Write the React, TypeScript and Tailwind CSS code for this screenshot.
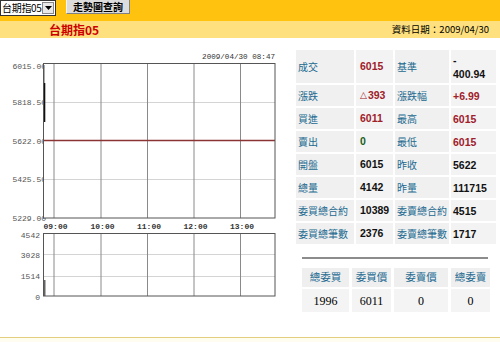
import React from "react";

const CJK = "'Noto Sans CJK TC', 'Noto Sans CJK SC', sans-serif";

type Cell = { t: string; c?: string };

const rows: [string, Cell, string, Cell][] = [
  ["成交", { t: "6015", c: "red" }, "基準", { t: "-\n400.94", c: "black" }],
  ["漲跌", { t: "△393", c: "red" }, "漲跌幅", { t: "+6.99", c: "red" }],
  ["買進", { t: "6011", c: "red" }, "最高", { t: "6015", c: "red" }],
  ["賣出", { t: "0", c: "green" }, "最低", { t: "6015", c: "red" }],
  ["開盤", { t: "6015" }, "昨收", { t: "5622" }],
  ["總量", { t: "4142" }, "昨量", { t: "111715" }],
  ["委買總合約", { t: "10389" }, "委賣總合約", { t: "4515" }],
  ["委買總筆數", { t: "2376" }, "委賣總筆數", { t: "1717" }],
];

function valColor(c?: string) {
  if (c === "red") return "text-[#a0202a]";
  if (c === "green") return "text-[#1b5e1b]";
  return "text-[#111]";
}

function Val({ t }: { t: string }) {
  if (t.startsWith("△")) {
    return (
      <>
        <span className="text-[9px] font-bold mr-[1px]" style={{ fontFamily: "'DejaVu Sans', sans-serif" }}>
          △
        </span>
        {t.slice(1)}
      </>
    );
  }
  return <>{t}</>;
}

function Chart() {
  const vx = [54, 101, 147.5, 194, 240.5];
  const times = ["09:00", "10:00", "11:00", "12:00", "13:00"];
  const yl: [string, number][] = [
    ["6015.00", 66],
    ["5818.50", 102],
    ["5622.00", 140.5],
    ["5425.50", 179],
    ["5229.00", 218],
  ];
  const vl: [string, number][] = [
    ["4542", 235],
    ["3028", 255],
    ["1514", 276],
    ["0", 297],
  ];
  return (
    <svg width={290} height={299} viewBox="0 38 290 299" className="block">
      <text x={275} y={59} textAnchor="end" fontFamily="'Liberation Mono', monospace" fontSize={7.6} fill="#333">
        2009/04/30 08:47
      </text>
      {yl.map(([t, y]) => (
        <text key={t} x={46} y={y + 3} textAnchor="end" fontFamily="'Liberation Mono', monospace" fontSize={8} fill="#555">
          {t}
        </text>
      ))}
      <rect x={43} y={63} width={232} height={155} fill="#fff" />
      {[102, 179].map((y) => (
        <line key={y} x1={43} x2={275} y1={y + 0.5} y2={y + 0.5} stroke="#d4d4d4" strokeWidth={1} />
      ))}
      {vx.map((x) => (
        <line key={x} x1={x} x2={x} y1={63} y2={218} stroke="#8a8a8a" strokeWidth={1} />
      ))}
      <line x1={43} x2={275} y1={140.5} y2={140.5} stroke="#8b3434" strokeWidth={1.5} />
      <rect x={43.5} y={65} width={1.5} height={18} fill="#aaa" />
      <rect x={43.5} y={83} width={1.8} height={39} fill="#111" />
      <rect x={43.5} y={63.5} width={231.5} height={154.5} fill="none" stroke="#555" strokeWidth={1} />
      {times.map((t, i) => (
        <text key={t} x={vx[i] + 1.5} y={229} textAnchor="middle" fontFamily="'Liberation Mono', monospace" fontWeight="bold" fontSize={8} fill="#333">
          {t}
        </text>
      ))}
      {vl.map(([t, y]) => (
        <text key={t} x={40} y={y + 3} textAnchor="end" fontFamily="'Liberation Mono', monospace" fontSize={8} fill="#555">
          {t}
        </text>
      ))}
      <rect x={43} y={233} width={232} height={63} fill="#fff" />
      {[254, 276].map((y) => (
        <line key={y} x1={43} x2={275} y1={y + 0.5} y2={y + 0.5} stroke="#d4d4d4" strokeWidth={1} />
      ))}
      {vx.map((x) => (
        <line key={x} x1={x} x2={x} y1={233} y2={296} stroke="#8a8a8a" strokeWidth={1} />
      ))}
      <rect x={44} y={280} width={1.5} height={16} fill="#666" />
      <rect x={43.5} y={233.5} width={231.5} height={62.5} fill="none" stroke="#555" strokeWidth={1} />
    </svg>
  );
}

export default function App() {
  return (
    <div className="w-[500px] h-[342px] bg-white overflow-hidden" style={{ fontFamily: CJK }}>
      {/* top bar */}
      <div className="h-[21px] bg-[#fec20f] flex items-start">
        <div className="w-[56px] h-[16px] bg-white border border-[#333] flex items-center justify-between">
          <span className="text-[10px] leading-none text-black pl-[1px] tracking-[-0.3px] whitespace-nowrap">台期指05</span>
          <div className="w-[12px] h-[12px] mr-[1px] shrink-0 bg-[#e8e8e8] border border-[#888] flex items-center justify-center">
            <svg width="7" height="4" viewBox="0 0 7 4">
              <polygon points="0,0 7,0 3.5,4" fill="#000" />
            </svg>
          </div>
        </div>
        <div className="ml-[10px] w-[64px] h-[14px] bg-[#dcdcdc] border-r border-b border-[#808080] border-l border-l-[#f4f4f4] flex items-center justify-center">
          <span className="text-[10px] leading-none font-bold text-black whitespace-nowrap">走勢圖查詢</span>
        </div>
      </div>
      {/* second band */}
      <div className="h-[17px] bg-[#ffe07e] flex items-center justify-between">
        <span className="pl-[49px] text-[12px] leading-none font-bold text-[#cc0000]">台期指05</span>
        <span className="pr-[11px] text-[9.5px] leading-none text-black">資料日期：2009/04/30</span>
      </div>
      {/* main */}
      <div className="h-[299px] flex">
        <div className="w-[296px] shrink-0">
          <Chart />
        </div>
        <div className="pt-[12px]">
          <div className="grid grid-cols-[58px_37px_54px_45px] gap-[2px] grid-rows-[33px_repeat(7,21px)]">
            {rows.map(([l1, v1, l2, v2], i) => (
              <React.Fragment key={i}>
                <div className="bg-[#f0f0f0] flex items-center pl-[2px] text-[10px] leading-none text-[#22698f] whitespace-nowrap">
                  {l1}
                </div>
                <div
                  className={`bg-[#f3f3f3] flex items-center pl-[4px] text-[10.5px] leading-none font-bold whitespace-nowrap ${valColor(v1.c)}`}
                  style={{ fontFamily: "'Liberation Sans', 'Noto Sans CJK TC', sans-serif" }}
                >
                  <Val t={v1.t} />
                </div>
                <div className="bg-[#f0f0f0] flex items-center pl-[2px] text-[10px] leading-none text-[#22698f] whitespace-nowrap">
                  {l2}
                </div>
                <div
                  className={`bg-[#f3f3f3] flex items-center pl-[2px] text-[10.5px] leading-[14px] font-bold whitespace-pre ${valColor(v2.c)}`}
                  style={{ fontFamily: "'Liberation Sans', 'Noto Sans CJK TC', sans-serif" }}
                >
                  {v2.t}
                </div>
              </React.Fragment>
            ))}
          </div>
          <div className="ml-[6px] mt-[13px] w-[186px] h-[2px] bg-[#8c8c8c]" />
          <div className="ml-[6px] mt-[9px] grid grid-cols-[47px_39px_54px_39px] gap-x-[3px] gap-y-[2px] grid-rows-[19px_23px]">
            {["總委買", "委買價", "委賣價", "總委賣"].map((h) => (
              <div key={h} className="bg-[#efefef] flex items-center justify-center text-[10.5px] leading-none text-[#22698f]">
                {h}
              </div>
            ))}
            {["1996", "6011", "0", "0"].map((v, i) => (
              <div
                key={i}
                className="bg-[#f4f4f4] flex items-center justify-center text-[12px] leading-none text-black"
                style={{ fontFamily: "'Liberation Serif', serif" }}
              >
                {v}
              </div>
            ))}
          </div>
        </div>
      </div>
      <div className="h-[1px] bg-[#e2cf7e]" />
      <div className="h-[4px] bg-[#fffcf0]" />
    </div>
  );
}
